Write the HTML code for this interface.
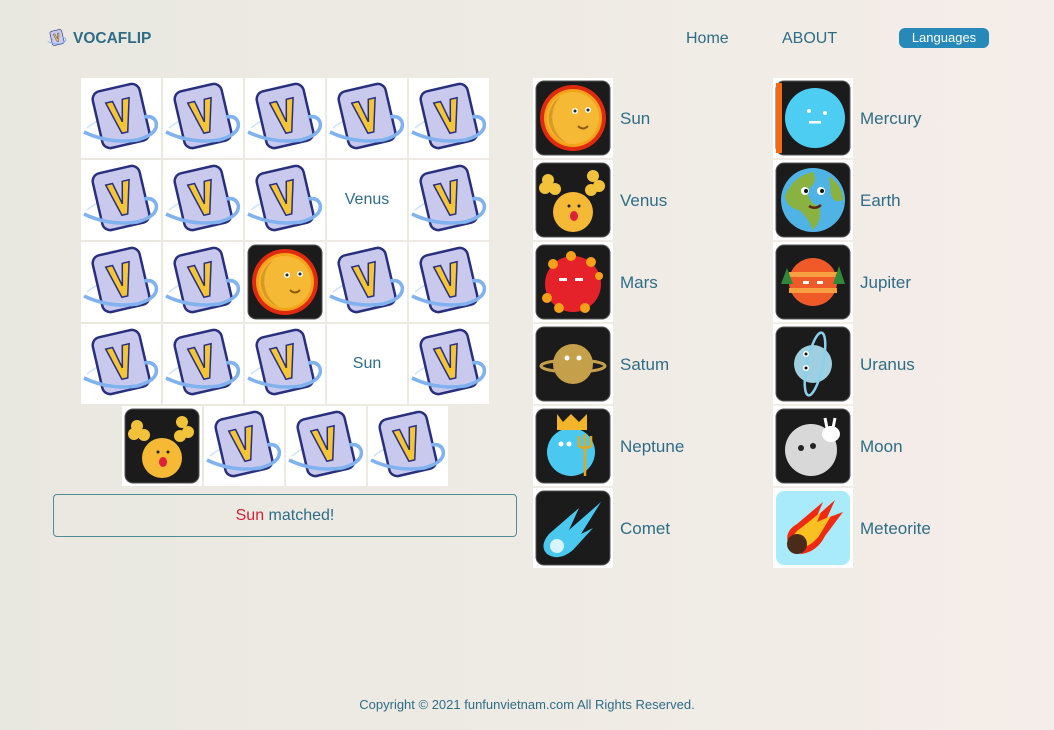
<!DOCTYPE html>
<html><head><meta charset="utf-8">
<style>
*{margin:0;padding:0;box-sizing:border-box}
body{width:1054px;height:730px;overflow:hidden;position:relative;font-family:"Liberation Sans",sans-serif;color:#2f6d87;background:linear-gradient(90deg,#e9e8e0 0%,#eeebe4 50%,#f5ede9 100%)}
.a{position:absolute}
.c{position:absolute;width:80px;height:80px;background:#fff}
.c svg{position:absolute;left:0;top:0;width:80px;height:80px}
.lbl{position:absolute;font-size:17px;color:#2f6d87}
.txt{display:flex;align-items:center;justify-content:center;font-size:16px;color:#2f6d87}
</style></head><body>
<svg width="0" height="0" style="position:absolute">
<defs>
<symbol id="back" viewBox="0 0 80 80">
<path d="M6 50 Q20 38 40 38" fill="none" stroke="#b9d6f5" stroke-width="1.5" opacity=".7"/>
<g transform="rotate(-13 40 38)">
<rect x="16" y="9" width="48" height="58" rx="8" fill="#c9c9ee" stroke="#28307e" stroke-width="2.5"/>
<path d="M28 22 L35 22 L40 44 L45 22 L52 22 L43 55 L37 55 Z" fill="#f5c534" stroke="#28307e" stroke-width="1.5"/>
</g>
<path d="M3 54 Q28 66 56 62 Q78 56 75 44 Q72 37 63 39" fill="none" stroke="#7fb2ef" stroke-width="3.5"/>
</symbol>
<symbol id="bg" viewBox="0 0 80 80"><rect x="3" y="3" width="74" height="74" rx="8" fill="#1b1b1b" stroke="#555" stroke-width="1"/></symbol>
</defs></svg>

<svg class="a" style="left:46px;top:28px" width="22" height="20" viewBox="0 0 80 80"><use href="#back"/></svg>
<div class="a" style="left:73px;top:30px;font-size:15.5px;font-weight:bold;color:#2f6d87">VOCAFLIP</div>
<div class="a" style="left:686px;top:30px;font-size:16px">Home</div>
<div class="a" style="left:782px;top:30px;font-size:16px">ABOUT</div>
<div class="a" style="left:899px;top:28px;width:90px;height:20px;border-radius:6px;background:#2789b8;color:#fff;font-size:13px;text-align:center;line-height:20px">Languages</div>

<div id="grid"></div>

<div class="a" style="left:53px;top:494px;width:464px;height:43px;border:1px solid #4f8c96;border-radius:4px;display:flex;align-items:center;justify-content:center;font-size:16px;color:#2f6d87"><span style="color:#d0223a">Sun</span>&nbsp;matched!</div>

<div id="list"></div>

<div class="a" style="left:0;width:1054px;top:697px;text-align:center;font-size:13px;color:#2f6d87">Copyright © 2021 funfunvietnam.com All Rights Reserved.</div>

<script>
var B='<svg viewBox="0 0 80 80"><use href="#back"/></svg>';
var P={
sun:'<use href="#bg"/><circle cx="40" cy="40" r="33" fill="#e02a10"/><circle cx="40" cy="40" r="29" fill="#f7a21a"/><circle cx="40" cy="40" r="26" fill="#f6b935"/><path d="M28 18 A26 26 0 0 0 34 65 A30 30 0 0 1 28 18Z" fill="#d99a22"/><circle cx="42" cy="33" r="3" fill="#fff"/><circle cx="55" cy="32" r="3" fill="#fff"/><circle cx="42" cy="33" r="1.5" fill="#222"/><circle cx="55" cy="32" r="1.5" fill="#222"/><path d="M45 48 Q50 53 55 48" stroke="#8a5a10" stroke-width="2" fill="none"/>',
mercury:'<use href="#bg"/><rect x="3" y="5" width="6" height="70" fill="#f36a13"/><circle cx="42" cy="40" r="30" fill="#4dcdf2"/><rect x="36" y="43" width="12" height="2.5" fill="#fff"/><circle cx="36" cy="33" r="2" fill="#fff"/><circle cx="52" cy="35" r="2" fill="#fff"/>',
venus:'<use href="#bg"/><circle cx="15" cy="20" r="6" fill="#f2c23a"/><circle cx="12" cy="28" r="6" fill="#f2c23a"/><circle cx="22" cy="29" r="6" fill="#f2c23a"/><circle cx="60" cy="16" r="6" fill="#f2c23a"/><circle cx="66" cy="26" r="6" fill="#f2c23a"/><circle cx="58" cy="30" r="6" fill="#f2c23a"/><circle cx="40" cy="52" r="20" fill="#f6b935"/><circle cx="36" cy="46" r="1.5" fill="#222"/><circle cx="46" cy="46" r="1.5" fill="#222"/><ellipse cx="41" cy="56" rx="4" ry="5" fill="#e0203a"/>',
earth:'<use href="#bg"/><circle cx="40" cy="40" r="32" fill="#4fb3e6"/><path d="M12 36 Q20 16 40 12 Q46 22 34 30 Q36 44 46 46 Q50 60 40 70 Q34 56 26 50 Q14 48 12 36Z" fill="#8ab240"/><path d="M56 16 Q70 26 70 40 Q60 44 58 34Z" fill="#8ab240"/><circle cx="32" cy="31" r="4" fill="#fff"/><circle cx="48" cy="31" r="4" fill="#fff"/><circle cx="33" cy="31" r="2" fill="#111"/><circle cx="49" cy="31" r="2" fill="#111"/><path d="M36 46 Q42 50 48 45" stroke="#5a2a10" stroke-width="2.5" fill="none"/>',
mars:'<use href="#bg"/><circle cx="40" cy="42" r="28" fill="#e5222a"/><g fill="#f7a01a"><circle cx="20" cy="22" r="5"/><circle cx="38" cy="14" r="5"/><circle cx="58" cy="20" r="5"/><circle cx="66" cy="34" r="4"/><circle cx="14" cy="56" r="5"/><circle cx="26" cy="66" r="5"/><circle cx="52" cy="66" r="5"/></g><rect x="26" y="36" width="8" height="3" fill="#fff"/><rect x="42" y="36" width="8" height="3" fill="#fff"/>',
jupiter:'<use href="#bg"/><circle cx="40" cy="40" r="24" fill="#f05a28"/><rect x="16" y="30" width="48" height="5" fill="#f8a040"/><rect x="16" y="46" width="48" height="5" fill="#f8a040"/><path d="M8 42 L14 26 L20 42Z M60 42 L66 24 L72 42Z" fill="#2e8a3a"/><rect x="30" y="39" width="6" height="3" fill="#fff"/><rect x="44" y="39" width="6" height="3" fill="#fff"/>',
saturn:'<use href="#bg"/><circle cx="40" cy="40" r="20" fill="#c4a04a"/><ellipse cx="40" cy="42" rx="32" ry="6" fill="none" stroke="#c4a04a" stroke-width="3"/><circle cx="34" cy="34" r="2.5" fill="#fff"/><circle cx="46" cy="34" r="2.5" fill="#fff"/>',
uranus:'<use href="#bg"/><circle cx="40" cy="40" r="19" fill="#9dcfe0"/><ellipse cx="42" cy="40" rx="8" ry="32" fill="none" stroke="#8ad0ec" stroke-width="2.5" transform="rotate(12 42 40)"/><circle cx="33" cy="30" r="3" fill="#fff"/><circle cx="33" cy="44" r="3" fill="#fff"/><circle cx="33" cy="30" r="1.5" fill="#111"/><circle cx="33" cy="44" r="1.5" fill="#111"/>',
neptune:'<use href="#bg"/><circle cx="38" cy="46" r="24" fill="#4ac8ef"/><path d="M24 8 L30 16 L38 8 L46 16 L54 8 L54 24 L24 24Z" fill="#f2b52a"/><path d="M52 28 L52 70 M46 30 L46 40 Q52 44 58 40 L58 30" stroke="#e0a820" stroke-width="2.5" fill="none"/><circle cx="28" cy="38" r="2.5" fill="#fff"/><circle cx="36" cy="38" r="2.5" fill="#fff"/>',
moon:'<use href="#bg"/><circle cx="38" cy="44" r="26" fill="#d8d8d8"/><circle cx="28" cy="42" r="3" fill="#222"/><circle cx="40" cy="40" r="3" fill="#222"/><ellipse cx="58" cy="28" rx="9" ry="8" fill="#fff"/><path d="M52 12 L54 22 M62 12 L60 22" stroke="#fff" stroke-width="3"/>',
comet:'<use href="#bg"/><path d="M14 66 Q6 58 16 46 L46 20 L36 42 L68 14 L48 46 L60 40 L40 62 Q26 74 14 66Z" fill="#4ac8ef"/><circle cx="24" cy="58" r="7" fill="#d8f4ff"/>',
meteorite:'<rect x="3" y="3" width="74" height="74" rx="8" fill="#a9ebfa"/><path d="M16 58 Q10 44 24 36 L50 14 L44 28 L62 12 L54 30 L70 24 L52 48 Q44 64 28 66Z" fill="#f02a10"/><path d="M20 56 Q18 46 28 40 L48 24 L44 34 L58 28 L46 48 Q38 58 28 60Z" fill="#f8c020"/><circle cx="24" cy="56" r="10" fill="#4a2a18"/>'
};
function ic(k){return '<svg viewBox="0 0 80 80">'+P[k]+'</svg>';}
var g='',xs=[81,163,245,327,409];
var rows=[['b','b','b','b','b'],['b','b','b','Venus','b'],['b','b','sun','b','b'],['b','b','b','Sun','b']];
rows.forEach(function(r,i){r.forEach(function(v,j){
 var s='left:'+xs[j]+'px;top:'+(78+i*82)+'px';
 if(v=='b')g+='<div class="c" style="'+s+'">'+B+'</div>';
 else if(P[v])g+='<div class="c" style="'+s+'">'+ic(v)+'</div>';
 else g+='<div class="c txt" style="'+s+'">'+v+'</div>';
});});
['venus','b','b','b'].forEach(function(v,j){
 var s='left:'+(122+j*82)+'px;top:406px';
 g+='<div class="c" style="'+s+'">'+(v=='b'?B:ic(v))+'</div>';
});
document.getElementById('grid').innerHTML=g;
var L=[['sun','Sun','mercury','Mercury'],['venus','Venus','earth','Earth'],['mars','Mars','jupiter','Jupiter'],['saturn','Satum','uranus','Uranus'],['neptune','Neptune','moon','Moon'],['comet','Comet','meteorite','Meteorite']];
var h='';
L.forEach(function(r,i){var y=78+i*82;
 h+='<div class="c" style="left:533px;top:'+y+'px">'+ic(r[0])+'</div><div class="lbl" style="left:620px;top:'+(y+31)+'px">'+r[1]+'</div>';
 h+='<div class="c" style="left:773px;top:'+y+'px">'+ic(r[2])+'</div><div class="lbl" style="left:860px;top:'+(y+31)+'px">'+r[3]+'</div>';
});
document.getElementById('list').innerHTML=h;
</script>
</body></html>
